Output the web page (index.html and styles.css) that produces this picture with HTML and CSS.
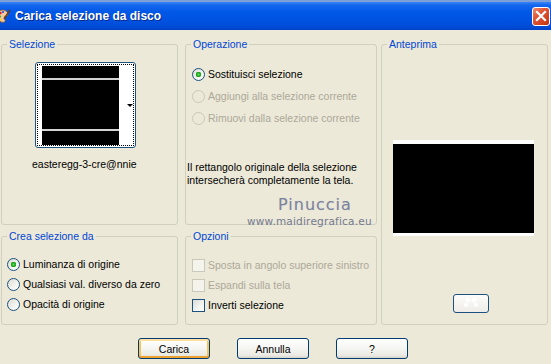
FILE: index.html
```html
<!DOCTYPE html>
<html lang="it">
<head>
    <meta charset="UTF-8">
    <meta name="viewport" content="width=device-width, initial-scale=1.0">
    <title>Carica selezione da disco</title>
    <link rel="stylesheet" href="styles.css">
</head>
<body>
    <div class="window">
        <div class="titlebar">
            <svg class="app-icon" width="14" height="16" viewBox="0 0 14 16">
                <path d="M1 6 C1 2 6 1 9 3 C12 5 11 8 9 8 C7 8 7 10 8 12 C9 15 3 15 2 12 C1 10 1 8 1 6 Z" fill="#f3c9a0" stroke="#8a5a32" stroke-width="0.8"/>
                <circle cx="3.5" cy="5" r="1.2" fill="#e02020"/>
                <circle cx="6" cy="4" r="1.1" fill="#2050e0"/>
                <circle cx="3" cy="8.5" r="1.1" fill="#20a030"/>
                <circle cx="4" cy="11.5" r="1.1" fill="#f0d020"/>
                <path d="M7 11 L13 2" stroke="#6b3a12" stroke-width="1.4"/>
            </svg>
            <span class="title">Carica selezione da disco</span>
            <span class="close">
                <svg width="12" height="12" viewBox="0 0 12 12">
                    <path d="M2 2 L10 10 M10 2 L2 10" stroke="#fff" stroke-width="2.2" stroke-linecap="square"/>
                </svg>
            </span>
        </div>

        <div class="groups">
            <fieldset class="group sel">
                <legend>Selezione</legend>
                <div class="thumb">
                    <div class="focus">
                        <div class="thumb-img"></div>
                        <span class="arrow"></span>
                    </div>
                </div>
                <div class="caption">easteregg-3-cre@nnie</div>
            </fieldset>

            <fieldset class="group op">
                <legend>Operazione</legend>
                <div class="opt-list">
                    <label class="row"><input type="radio" name="op" checked> Sostituisci selezione</label>
                    <label class="row disabled"><input type="radio" name="op" disabled> Aggiungi alla selezione corrente</label>
                    <label class="row disabled"><input type="radio" name="op" disabled> Rimuovi dalla selezione corrente</label>
                </div>
                <p class="desc">Il rettangolo originale della selezione<br>intersecherà completamente la tela.</p>
                <div class="wm-name">Pinuccia</div>
                <div class="wm-url">www.maidiregrafica.eu</div>
            </fieldset>

            <fieldset class="group preview">
                <legend>Anteprima</legend>
                <div class="preview-img"></div>
                <button type="button" class="zoom-btn" disabled>
                    <svg width="20" height="12" viewBox="0 0 20 12">
                        <circle cx="7" cy="4" r="2.5" fill="#fff"/>
                        <circle cx="13" cy="4" r="2.5" fill="#fff"/>
                        <circle cx="10" cy="8" r="2.5" fill="#f4f4f0"/>
                        <circle cx="5" cy="9" r="2" fill="#fff"/>
                        <circle cx="15" cy="9" r="2" fill="#fff"/>
                    </svg>
                </button>
            </fieldset>

            <fieldset class="group source">
                <legend>Crea selezione da</legend>
                <div class="opt-list">
                    <label class="row"><input type="radio" name="src" checked> Luminanza di origine</label>
                    <label class="row"><input type="radio" name="src"> Qualsiasi val. diverso da zero</label>
                    <label class="row"><input type="radio" name="src"> Opacità di origine</label>
                </div>
            </fieldset>

            <fieldset class="group options">
                <legend>Opzioni</legend>
                <div class="opt-list">
                    <label class="row disabled"><input type="checkbox" disabled> Sposta in angolo superiore sinistro</label>
                    <label class="row disabled"><input type="checkbox" disabled> Espandi sulla tela</label>
                    <label class="row"><input type="checkbox"> Inverti selezione</label>
                </div>
            </fieldset>
        </div>

        <div class="buttons">
            <button type="button" class="btn default">Carica</button>
            <button type="button" class="btn">Annulla</button>
            <button type="button" class="btn">?</button>
        </div>
    </div>
</body>
</html>
```

FILE: styles.css
```css
body {
    margin: 0;
    padding: 0;
    background: #ece9d8;
    font-family: "Liberation Sans", Arial, sans-serif;
    font-size: 10.5px;
    color: #000;
}
.window {
    width: 551px;
    height: 364px;
    overflow: hidden;
}
.titlebar {
    height: 30px;
    box-sizing: border-box;
    padding-top: 2px;
    display: flex;
    align-items: center;
    background: linear-gradient(to bottom, #7f9fd8 0, #7f9fd8 2px, #3a86f4 2px, #1566ee 5px, #0058e6 12px, #0054e3 60%, #004cd8 88%, #0042c6 100%);
}
.app-icon {
    margin-left: -3px;
    margin-right: 4px;
}
.title {
    color: #fff;
    font-weight: bold;
    font-size: 12px;
    line-height: 14px;
    text-shadow: 1px 1px 0 #0a2a8a;
}
.close {
    margin-left: auto;
    margin-right: 1px;
    width: 18px;
    height: 19px;
    box-sizing: border-box;
    border: 1px solid #fff;
    border-radius: 3px;
    background: linear-gradient(135deg, #f08c6a 0, #e2583a 35%, #cf3f1b 80%, #b8330f 100%);
    display: flex;
    align-items: center;
    justify-content: center;
}
.groups {
    display: grid;
    grid-template-columns: 177px 195px 167px;
    grid-template-rows: 188px 96px;
    column-gap: 4px;
    row-gap: 4px;
    padding: 7px 0 0 1px;
}
.group {
    margin: 0;
    padding: 0;
    min-width: 0;
    border: 1px solid #d0d0bf;
    border-radius: 3px;
    position: relative;
}
.group legend {
    margin-left: 5px;
    padding: 0 2px;
    line-height: 14px;
    color: #0046d5;
}
.sel { grid-column: 1; grid-row: 1; }
.op { grid-column: 2; grid-row: 1; margin-left: 3px; width: 192px; box-sizing: border-box; }
.preview { grid-column: 3; grid-row: 1 / 3; }
.source { grid-column: 1; grid-row: 2; }
.options { grid-column: 2; grid-row: 2; margin-left: 3px; width: 192px; box-sizing: border-box; }

.thumb {
    margin: 11px 0 0 33px;
    width: 101px;
    height: 86px;
    box-sizing: border-box;
    border: 1px solid #1c5180;
    border-radius: 3px;
    padding: 1px;
    background: #fff;
}
.focus {
    height: 100%;
    box-sizing: border-box;
    border: 1px dotted #000;
    padding: 1px 0 0 4px;
    display: flex;
}
.thumb-img {
    width: 78px;
    height: 79px;
    background: linear-gradient(to bottom, #000 0, #000 12px, #d4d4d4 12px, #d4d4d4 14px, #000 14px, #000 63px, #d4d4d4 63px, #d4d4d4 65px, #000 65px);
}
.arrow {
    align-self: center;
    margin-left: 8px;
    width: 0;
    height: 0;
    border-top: 3px solid #000;
    border-left: 3px solid transparent;
    border-right: 3px solid transparent;
}
.caption {
    margin-top: 10px;
    padding-left: 30px;
    line-height: 13px;
}

.opt-list {
    margin-top: 12px;
    padding-left: 6px;
}
.source .opt-list {
    margin-top: 11px;
    padding-left: 5px;
}
.source .row, .options .row {
    height: 20px;
}
.row {
    display: flex;
    align-items: center;
    height: 22px;
    white-space: nowrap;
}
.row.disabled {
    color: #aca899;
}
.row input {
    appearance: none;
    -webkit-appearance: none;
    margin: 0 3px 0 0;
    width: 13px;
    height: 13px;
    box-sizing: border-box;
    border: 1px solid #1c5180;
    background: linear-gradient(135deg, #dcdbd3 0, #f4f4f0 60%, #fff 100%);
    flex: none;
}
.row input[type="radio"] {
    border-radius: 50%;
}
.row input[type="radio"]:checked {
    background: radial-gradient(circle at 50% 50%, #62d85a 0, #2bb52b 1.5px, #1e9a1e 2.6px, transparent 3px), linear-gradient(135deg, #dcdbd3 0, #f4f4f0 60%, #fff 100%);
}
.row input:disabled {
    border-color: #cac8bb;
    background: #f4f3ec;
}
.row input[type="radio"]:disabled {
    background: transparent;
}

.desc {
    margin: 32px 0 0 1px;
    line-height: 13px;
}
.wm-name {
    position: absolute;
    left: 92px;
    top: 145px;
    font-family: "DejaVu Sans", sans-serif;
    font-size: 16px;
    line-height: 18px;
    letter-spacing: 1px;
    color: #7e839c;
    text-shadow: 0 0 1px #c9cbd6;
}
.wm-url {
    position: absolute;
    left: 61px;
    top: 163px;
    font-family: "DejaVu Sans", sans-serif;
    font-size: 10.5px;
    line-height: 14px;
    letter-spacing: 0.2px;
    color: #757a90;
}

.preview-img {
    margin: 89px 0 0 11px;
    width: 141px;
    height: 96px;
    box-sizing: border-box;
    background: #000;
    border-top: 4px solid #fff;
    border-bottom: 3px solid #fff;
}
.zoom-btn {
    display: block;
    margin: 58px 0 0 71px;
    width: 36px;
    height: 19px;
    padding: 0;
    border: 1px solid #1c5180;
    border-radius: 3px;
    background: linear-gradient(#fbfbf9, #eeede7);
}

.buttons {
    display: flex;
    gap: 27px;
    padding: 13px 0 0 138px;
}
.btn {
    width: 72px;
    height: 21px;
    padding: 0;
    border: 1px solid #003c74;
    border-radius: 3px;
    background: linear-gradient(to bottom, #fff 0, #f6f6f3 45%, #ebeae4 85%, #d8d3c8 100%);
    font-family: "Liberation Sans", Arial, sans-serif;
    font-size: 10.5px;
    color: #000;
}
.btn.default {
    box-shadow: inset 0 2px 0 #ffe0a0, inset 0 -2px 0 #eda12e, inset 2px 0 0 #f8c45a, inset -2px 0 0 #f8c45a;
}
```
